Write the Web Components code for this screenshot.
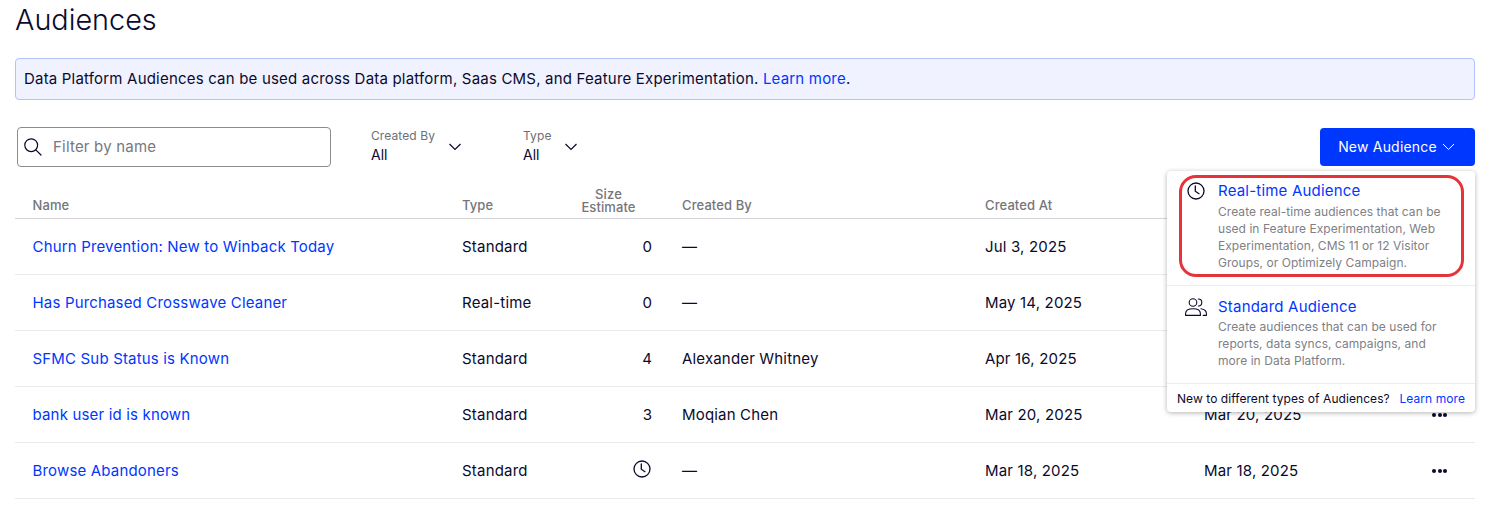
<!DOCTYPE html>
<html lang="en">

<head>
  <meta charset="UTF-8">
  <meta name="viewport" content="width=device-width, initial-scale=1.0">
  <title>Audiences</title>
<style>
  html, body {
    margin: 0;
    height: 506px;
    overflow: hidden;
    background: #fff;
    font-family: Inter, "Liberation Sans", sans-serif;
    color: #0a0a2d;
  }
  a {
    color: #0037ff;
    text-decoration: none;
  }
</style>
</head>

<body>

<template id="pagetemplate">
  <style>
    :host {
      display: block;
      position: relative;
      padding: 0 20px 0 15px;
    }
    h1 {
      margin: 0;
      height: 58px;
      padding-top: 2px;
      box-sizing: border-box;
      font-size: 28.8px;
      line-height: 36px;
      font-weight: 300;
    }
  </style>
  <h1><slot name="title"></slot></h1>
  <slot></slot>
</template>

<template id="bannertemplate">
  <style>
    :host {
      display: block;
      height: 42px;
      box-sizing: border-box;
      padding: 0 8px;
      border: 1px solid #b4c2fb;
      border-radius: 4px;
      background: #f0f2ff;
      font-size: 15px;
      line-height: 40px;
      letter-spacing: .195px;
    }
    ::slotted(a) {
      color: #0037ff;
      text-decoration: none;
    }
  </style>
  <slot></slot>
</template>

<template id="searchtemplate">
  <style>
    :host {
      display: flex;
      align-items: center;
      gap: 11px;
      width: 314px;
      height: 40px;
      box-sizing: border-box;
      padding: 0 0 2px 6px;
      border: 1px solid #8c8c8c;
      border-radius: 4px;
      color: #77777d;
      font-size: 15px;
      letter-spacing: .2px;
    }
    svg {
      width: 18px;
      height: 18px;
      flex: none;
      margin-top: 2px;
    }
  </style>
  <svg viewBox="0 0 18 18" fill="none" stroke="#0a0a2d" stroke-width="1.2" stroke-linecap="round"><circle cx="7.2" cy="7.2" r="6.4"/><path d="M11.800 11.800l5.200 5.200"/></svg>
  <slot></slot>
</template>

<template id="filtertemplate">
  <style>
    :host {
      display: block;
      position: relative;
    }
    .label {
      font-size: 12px;
      line-height: 14px;
      margin-bottom: 2px;
      letter-spacing: .1px;
      color: #6f6f73;
    }
    .value {
      font-size: 14px;
      line-height: 20px;
    }
    svg {
      position: absolute;
      top: 14px;
      width: 14px;
      height: 8px;
    }
  </style>
  <div class="label"></div>
  <div class="value"></div>
  <svg viewBox="0 0 14 8" fill="none" stroke="#0a0a2d" stroke-width="1.2"><path d="M1.5 1l5.500 5.500L12.500 1"/></svg>
</template>

<template id="rowtemplate">
  <style>
    :host {
      display: grid;
      grid-template-columns: 447px 119px 71px 333px 219px 228px 1fr;
      align-items: center;
      height: 56px;
      box-sizing: border-box;
      border-bottom: 1px solid #e9e9ec;
      font-size: 15px;
      letter-spacing: .17px;
    }
    .name {
      padding-left: 17.5px;
      letter-spacing: .17px;
    }
    .type { letter-spacing: .2px; }
    .size {
      text-align: right;
      letter-spacing: 0;
    }
    .by { padding-left: 30px; }
    .dots {
      display: flex;
      gap: 1.500px;
    }
    .dots i {
      width: 4px;
      height: 4px;
      border-radius: 50%;
      background: #0a0a2d;
    }
    ::slotted(a) {
      color: #0037ff;
      text-decoration: none;
    }
    ::slotted(svg) {
      display: block;
      width: 18px;
      height: 18px;
      margin: 0 1px 4px auto;
    }
  </style>
  <div class="name"><slot name="name"></slot></div>
  <div class="type"></div>
  <div class="size"><slot name="size"></slot></div>
  <div class="by"></div>
  <div class="at"></div>
  <div class="mod"></div>
  <div class="actions"></div>
</template>

<template id="headtemplate">
  <style>
    :host {
      display: grid;
      grid-template-columns: 447px 119px 55px 349px 219px 1fr;
      align-items: end;
      height: 41px;
      box-sizing: border-box;
      padding-bottom: 6px;
      border-bottom: 1px solid #d4d4d8;
      font-size: 13px;
      line-height: 13px;
      letter-spacing: .1px;
      font-weight: 500;
      color: #75757a;
    }
    ::slotted(span) { display: block; }
  </style>
  <slot></slot>
</template>

<template id="menutemplate">
  <style>
    :host {
      display: block;
      position: absolute;
      top: 128px;
      right: 20px;
      width: 308px;
      font-size: 13px;
    }
    .btn {
      display: flex;
      align-items: center;
      justify-content: center;
      gap: 5px;
      width: 155px;
      height: 38px;
      box-sizing: border-box;
      padding-right: 2px;
      margin-left: auto;
      border-radius: 4px;
      background: #0037ff;
      color: #fff;
      font-size: 14px;
      letter-spacing: .2px;
    }
    .btn span { margin-top: -1px; }
    .btn svg {
      width: 13px;
      height: 8px;
    }
    .panel {
      position: relative;
      margin-top: 5px;
      background: #fff;
      border-radius: 4px;
      box-shadow: 0 1px 5px rgba(0, 0, 0, .3);
    }
  </style>
  <div class="btn"><span>New Audience</span><svg viewBox="0 0 13 8" fill="none" stroke="#fff" stroke-width="1"><path d="M1 1l5.500 5.500L12 1"/></svg></div>
  <div class="panel"><slot></slot></div>
</template>

<template id="optiontemplate">
  <style>
    :host {
      display: grid;
      grid-template-columns: 51px 1fr;
      box-sizing: border-box;
      padding: 10px 30px 14px 0;
      border-bottom: 1px solid #ececef;
    }
    :host([second]) {
      padding: 11px 30px 14px 0;
    }
    .icon {
      display: flex;
      justify-content: flex-end;
      padding: 1px 11px 0 0;
    }
    .title {
      font-size: 15px;
      line-height: 20px;
      letter-spacing: .2px;
      color: #0037ff;
    }
    .desc {
      margin-top: 2px;
      font-size: 12px;
      line-height: 17px;
      letter-spacing: .05px;
      color: #808086;
    }
    :host([second]) .desc {
      margin-top: 1px;
    }
    ::slotted(svg) {
      display: block;
    }
  </style>
  <div class="icon"><slot name="icon"></slot></div>
  <div>
    <div class="title"></div>
    <div class="desc"><slot></slot></div>
  </div>
</template>

<template id="calltemplate">
  <style>
    :host {
      position: absolute;
      inset: 4px 11px auto 12px;
      height: 102px;
      box-sizing: border-box;
      border: 3px solid #e6333a;
      border-radius: 17px;
      pointer-events: none;
    }
  </style>
</template>

<template id="footertemplate">
  <style>
    :host {
      display: flex;
      justify-content: space-between;
      align-items: center;
      height: 28px;
      padding: 0 10px;
      font-size: 12px;
      letter-spacing: .065px;
      white-space: nowrap;
    }
    ::slotted(a) {
      color: #0037ff;
      text-decoration: none;
    }
  </style>
  <slot></slot>
</template>

<audience-page>
  <span slot="title">Audiences</span>
  <info-banner>Data Platform Audiences can be used across Data platform, Saas CMS, and Feature Experimentation. <a href="#">Learn more</a>.</info-banner>
  <div style="display:flex;align-items:center;height:40px;margin:27px 0 11px 2px">
    <search-box>Filter by name</search-box>
    <filter-select label="Created By" value="All" style="width:152px;margin-left:40px" arrow="77"></filter-select>
    <filter-select label="Type" value="All" style="width:80px" arrow="41"></filter-select>
  </div>
  <audience-head>
    <span style="padding-left:17.5px">Name</span>
    <span>Type</span>
    <span style="text-align:center;margin-bottom:-2px">Size<br>Estimate</span>
    <span style="padding-left:46px">Created By</span>
    <span>Created At</span>
  </audience-head>
  <audience-row type="Standard" size="0" by="—" at="Jul 3, 2025"><a slot="name" href="#">Churn Prevention: New to Winback Today</a></audience-row>
  <audience-row type="Real-time" size="0" by="—" at="May 14, 2025"><a slot="name" href="#">Has Purchased Crosswave Cleaner</a></audience-row>
  <audience-row type="Standard" size="4" by="Alexander Whitney" at="Apr 16, 2025"><a slot="name" href="#">SFMC Sub Status is Known</a></audience-row>
  <audience-row type="Standard" size="3" by="Moqian Chen" at="Mar 20, 2025" mod="Mar 20, 2025" actions><a slot="name" href="#">bank user id is known</a></audience-row>
  <audience-row type="Standard" by="—" at="Mar 18, 2025" mod="Mar 18, 2025" actions>
    <a slot="name" href="#">Browse Abandoners</a>
    <svg slot="size" viewBox="0 0 18 18" fill="none" stroke="#0a0a2d" stroke-width="1.300" stroke-linecap="round" stroke-linejoin="round"><circle cx="9" cy="9" r="8"/><path d="M8.300 4v5.300l3.700 2.400"/></svg>
  </audience-row>
  <new-audience-menu>
    <menu-option title="Real-time Audience">
      <svg slot="icon" width="18" height="18" viewBox="0 0 18 18" fill="none" stroke="#0a0a2d" stroke-width="1.300" stroke-linecap="round" stroke-linejoin="round" style="margin-right:2px"><circle cx="9" cy="9" r="8"/><path d="M8.300 4v5.300l3.700 2.400"/></svg>
      Create real-time audiences that can be used in Feature Experimentation, Web Experimentation, CMS 11 or 12 Visitor Groups, or Optimizely Campaign.
    </menu-option>
    <menu-option second title="Standard Audience">
      <svg slot="icon" width="22" height="18" viewBox="0 0 22 18" fill="none" stroke="#0a0a2d" stroke-width="1.100" stroke-linecap="round" stroke-linejoin="round"><circle cx="8" cy="4.500" r="3.800"/><path d="M.6 17.400v-1.800C.6 12.500 3.800 10.800 8 10.800s7.400 1.700 7.400 4.800v1.800zM13.300 1a3.500 3.500 0 0 1 0 7M16 10.800c3.300.5 5.400 2.200 5.400 4.800v1.800h-3.200"/></svg>
      Create audiences that can be used for reports, data syncs, campaigns, and more in Data Platform.
    </menu-option>
    <menu-footer>New to different types of Audiences? <a href="#">Learn more</a></menu-footer>
    <call-out></call-out>
  </new-audience-menu>
</audience-page>

<script>
  // plain elements: template goes straight into the shadow root
  function simple(name, templateId) {
    customElements.define(name, class extends HTMLElement {
      constructor() {
        super();
        this.attachShadow({ mode: "open" });
        this.shadowRoot.appendChild(document.querySelector(templateId).content.cloneNode(true));
      }
    });
  }
  simple("audience-page", "#pagetemplate");
  simple("info-banner", "#bannertemplate");
  simple("search-box", "#searchtemplate");
  simple("audience-head", "#headtemplate");
  simple("new-audience-menu", "#menutemplate");
  simple("menu-footer", "#footertemplate");
  simple("call-out", "#calltemplate");

  customElements.define("filter-select", class extends HTMLElement {
    constructor() {
      super();
      this.attachShadow({ mode: "open" });
      this.shadowRoot.appendChild(document.querySelector("#filtertemplate").content.cloneNode(true));
    }
    connectedCallback() {
      this.shadowRoot.querySelector(".label").textContent = this.getAttribute("label");
      this.shadowRoot.querySelector(".value").textContent = this.getAttribute("value");
      this.shadowRoot.querySelector("svg").style.left = this.getAttribute("arrow") + "px";
    }
  });

  customElements.define("audience-row", class extends HTMLElement {
    constructor() {
      super();
      this.attachShadow({ mode: "open" });
      this.shadowRoot.appendChild(document.querySelector("#rowtemplate").content.cloneNode(true));
    }
    connectedCallback() {
      const root = this.shadowRoot;
      root.querySelector(".type").textContent = this.getAttribute("type");
      if (this.hasAttribute("size")) {
        root.querySelector(".size").textContent = this.getAttribute("size");
      }
      root.querySelector(".by").textContent = this.getAttribute("by");
      root.querySelector(".at").textContent = this.getAttribute("at");
      root.querySelector(".mod").textContent = this.getAttribute("mod") || "";
      if (this.hasAttribute("actions")) {
        root.querySelector(".actions").innerHTML = '<div class="dots"><i></i><i></i><i></i></div>';
      }
    }
  });

  customElements.define("menu-option", class extends HTMLElement {
    constructor() {
      super();
      this.attachShadow({ mode: "open" });
      this.shadowRoot.appendChild(document.querySelector("#optiontemplate").content.cloneNode(true));
    }
    connectedCallback() {
      this.shadowRoot.querySelector(".title").textContent = this.getAttribute("title");
    }
  });
</script>

</body>

</html>
